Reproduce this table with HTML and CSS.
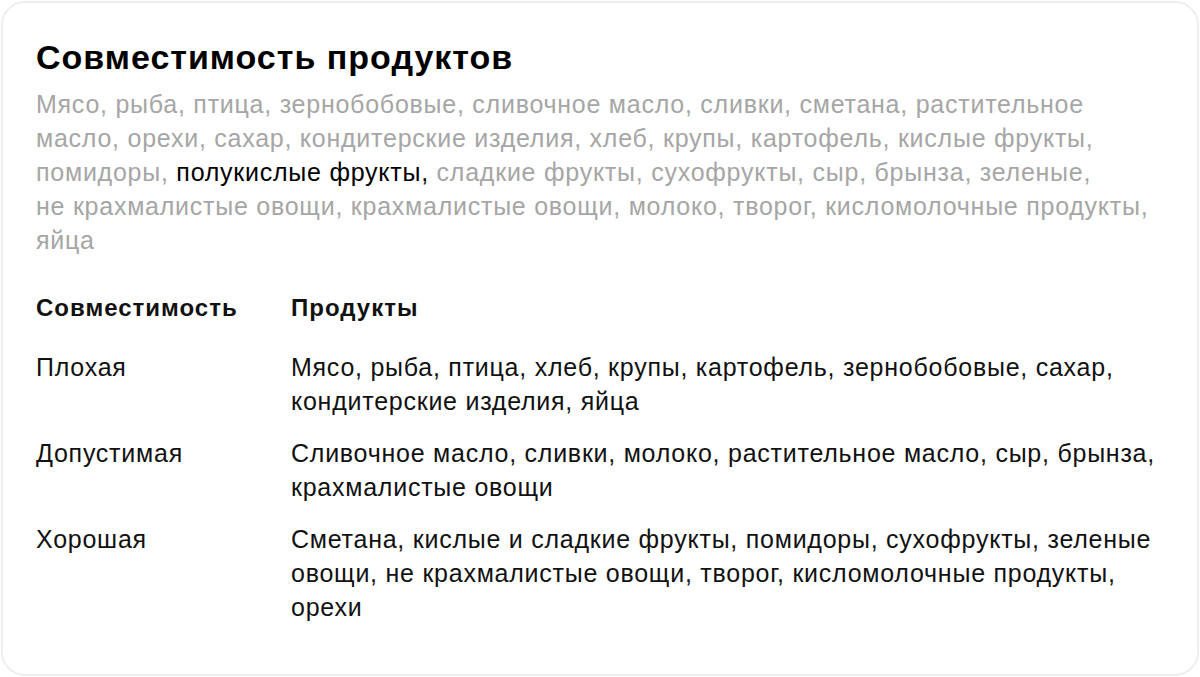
FILE: index.html
```html
<!DOCTYPE html>
<html lang="ru">
<head>
<meta charset="utf-8">
<link rel="stylesheet" href="styles.css">
</head>
<body>
<div class="card">
  <h1 class="title">Совместимость продуктов</h1>
  <p class="lead">Мясо, рыба, птица, зернобобовые, сливочное масло, сливки, сметана, растительное масло, орехи, сахар, кондитерские изделия, хлеб, крупы, картофель, кислые фрукты, помидоры, <span class="hl">полукислые фрукты,</span> сладкие фрукты, сухофрукты, сыр, брынза, зеленые, не&nbsp;крахмалистые овощи, крахмалистые овощи, молоко, творог, кисломолочные продукты, яйца</p>
  <div class="table">
    <div class="row head">
      <div class="c1">Совместимость</div>
      <div class="c2">Продукты</div>
    </div>
    <div class="row">
      <div class="c1">Плохая</div>
      <div class="c2">Мясо, рыба, птица, хлеб, крупы, картофель, зернобобовые, сахар, кондитерские изделия, яйца</div>
    </div>
    <div class="row">
      <div class="c1">Допустимая</div>
      <div class="c2">Сливочное масло, сливки, молоко, растительное масло, сыр, брынза, крахмалистые овощи</div>
    </div>
    <div class="row">
      <div class="c1">Хорошая</div>
      <div class="c2">Сметана, кислые и сладкие фрукты, помидоры, сухофрукты, зеленые овощи, не&nbsp;крахмалистые овощи, творог, кисломолочные продукты, орехи</div>
    </div>
  </div>
</div>
</body>
</html>
```

FILE: styles.css
```css
html, body {
  margin: 0;
  padding: 0;
  background: #ffffff;
}
body {
  padding: 1px;
  font-family: "Liberation Sans", Arial, sans-serif;
  color: #111;
}
.card {
  box-sizing: border-box;
  height: 675px;
  border: 2px solid #eeeeee;
  border-radius: 24px;
  padding: 34px 33px 0 33px;
}
.title {
  margin: 0;
  font-size: 34px;
  line-height: 40px;
  font-weight: 700;
  letter-spacing: 1px;
  color: #000;
}
.lead {
  margin: 10px 0 0 0;
  font-size: 25px;
  line-height: 34px;
  letter-spacing: 0.75px;
  color: #a6a6a6;
}
.hl { color: #000; }
.table {
  margin-top: 34px;
  display: flex;
  flex-direction: column;
  gap: 18px;
}
.row {
  display: flex;
  font-size: 25px;
  line-height: 34px;
  letter-spacing: 0.75px;
  color: #111;
}
.row.head {
  font-size: 24px;
  font-weight: 700;
  letter-spacing: 1px;
  margin-bottom: 7px;
}
.c1 { width: 255px; flex-shrink: 0; }
.c2 { flex: 1; }
```
